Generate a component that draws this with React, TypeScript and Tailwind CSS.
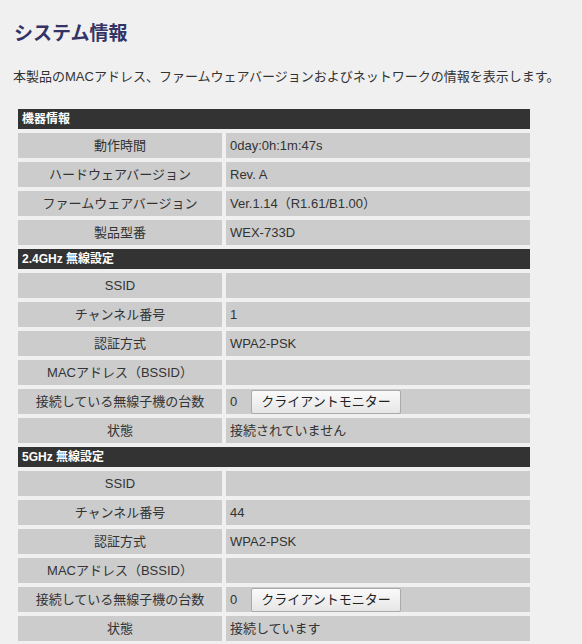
const FONT = "font-['Liberation_Sans','Noto_Sans_CJK_JP',sans-serif]";

type Row = { label: string; value?: string; monitor?: boolean };

const sections: { title: string; rows: Row[] }[] = [
  {
    title: "機器情報",
    rows: [
      { label: "動作時間", value: "0day:0h:1m:47s" },
      { label: "ハードウェアバージョン", value: "Rev. A" },
      { label: "ファームウェアバージョン", value: "Ver.1.14（R1.61/B1.00）" },
      { label: "製品型番", value: "WEX-733D" },
    ],
  },
  {
    title: "2.4GHz 無線設定",
    rows: [
      { label: "SSID", value: "" },
      { label: "チャンネル番号", value: "1" },
      { label: "認証方式", value: "WPA2-PSK" },
      { label: "MACアドレス（BSSID）", value: "" },
      { label: "接続している無線子機の台数", value: "0", monitor: true },
      { label: "状態", value: "接続されていません" },
    ],
  },
  {
    title: "5GHz 無線設定",
    rows: [
      { label: "SSID", value: "" },
      { label: "チャンネル番号", value: "44" },
      { label: "認証方式", value: "WPA2-PSK" },
      { label: "MACアドレス（BSSID）", value: "" },
      { label: "接続している無線子機の台数", value: "0", monitor: true },
      { label: "状態", value: "接続しています" },
    ],
  },
];

function InfoRow({ row }: { row: Row }) {
  return (
    <>
      <div className="h-[25px] bg-[#cccccc] flex items-center justify-center text-[13px] text-[#333]">
        {row.label}
      </div>
      <div className="h-[25px] bg-[#cccccc] flex items-center pl-[4px] text-[13px] text-[#333]">
        {row.monitor ? (
          <div className="flex items-center gap-[14px]">
            <span>{row.value}</span>
            <button className="h-[24px] px-[9px] border border-[#aaaaaa] rounded-[2px] bg-gradient-to-b from-[#fafafa] to-[#e6e6e6] text-[13px] text-[#222]">
              クライアントモニター
            </button>
          </div>
        ) : (
          row.value
        )}
      </div>
    </>
  );
}

export default function App() {
  return (
    <div className={`${FONT} min-h-[644px] bg-[#f0f0f0] text-[#333] px-[14px] pt-[22px]`}>
      <h1 className="text-[19px] font-bold text-[#333366] leading-[24px]">システム情報</h1>

      <p className="mt-[22px] -ml-px text-[13px] leading-[18px]">
        本製品のMACアドレス、ファームウェアバージョンおよびネットワークの情報を表示します。
      </p>

      <div className="mt-[23px] ml-[4px] w-[512px] grid grid-cols-[204px_304px] gap-[4px]">
        {sections.map((s) => (
          <div key={s.title} className="contents">
            <div className="col-span-2 h-[20px] bg-[#333333] text-white text-[12px] font-bold flex items-center pl-[4px]">
              {s.title}
            </div>
            {s.rows.map((r, i) => (
              <InfoRow key={i} row={r} />
            ))}
          </div>
        ))}
      </div>
    </div>
  );
}
